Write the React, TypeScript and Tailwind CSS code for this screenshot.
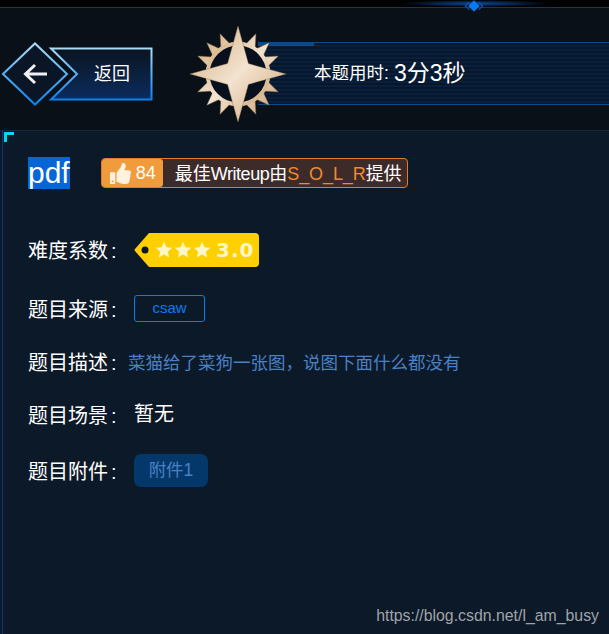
import { FaThumbsUp } from 'react-icons/fa';

const FONT = "font-['Liberation_Sans','Noto_Sans_CJK_SC',sans-serif]";

// alternating radius polygon, angles in degrees from north
function polar(r: number, deg: number): string {
  const a = (deg * Math.PI) / 180;
  return `${(50 + r * Math.sin(a)).toFixed(2)},${(50 - r * Math.cos(a)).toFixed(2)}`;
}

function spikeRing(): string {
  const pts: string[] = [];
  for (let q = 0; q < 4; q++) {
    for (const d of [24, 45, 66]) {
      pts.push(polar(32, q * 90 + d - 9));
      pts.push(polar(45, q * 90 + d));
      pts.push(polar(32, q * 90 + d + 9));
    }
  }
  return pts.join(' ');
}

function bigStar(): string {
  const pts: string[] = [];
  for (let q = 0; q < 4; q++) {
    pts.push(polar(49, q * 90));
    pts.push(polar(15, q * 90 + 45));
  }
  return pts.join(' ');
}

function Medal() {
  return (
    <svg viewBox="0 0 100 100" className="relative z-10 h-[98px] w-[98px] shrink-0">
      <defs>
        <linearGradient id="gold" x1="0" y1="0" x2="1" y2="1">
          <stop offset="0" stopColor="#d2aa78" />
          <stop offset="0.5" stopColor="#f3e3d0" />
          <stop offset="1" stopColor="#cda272" />
        </linearGradient>
      </defs>
      <polygon points={spikeRing()} fill="url(#gold)" stroke="#7c6a4c" strokeWidth="0.5" />
      <circle cx="50" cy="50" r="33" fill="url(#gold)" />
      <circle cx="50" cy="50" r="29" fill="#07101c" />
      <polygon points={bigStar()} fill="url(#gold)" stroke="#8a7450" strokeWidth="0.4" />
    </svg>
  );
}

function BackButton() {
  return (
    <div className="relative h-[64px] w-[152px] shrink-0">
      <svg viewBox="0 0 152 64" className="absolute inset-0 h-full w-full">
        <defs>
          <linearGradient id="edge" x1="0" y1="0" x2="0" y2="1">
            <stop offset="0" stopColor="#a9dcf7" />
            <stop offset="1" stopColor="#0a82ee" />
          </linearGradient>
          <linearGradient id="fill" x1="0" y1="0" x2="0" y2="1">
            <stop offset="0" stopColor="#0a1420" />
            <stop offset="1" stopColor="#0b2c5e" />
          </linearGradient>
        </defs>
        <path d="M50 6.5H150.5V57.5H50L76 32Z" fill="url(#fill)" stroke="url(#edge)" strokeWidth="2" />
        <path d="M2 32L34 1.5L66 32L34 62.5Z" fill="#0a1626" stroke="url(#edge)" strokeWidth="2" />
        <path d="M24 32H46M34 23L24.5 32L34 41" fill="none" stroke="#f0f0f4" strokeWidth="3" />
      </svg>
      <span className="absolute left-[93px] top-[21px] text-[18px] leading-[22px] text-white">返回</span>
    </div>
  );
}

function Row({ label, className, children }: { label: string; className: string; children: React.ReactNode }) {
  return (
    <div className={`flex items-center ${className}`}>
      <span className="w-[106px] shrink-0 pt-[2px] text-[20px] leading-[28px] text-white">
        {label}
        <span className="ml-[3px]">:</span>
      </span>
      {children}
    </div>
  );
}

function Star() {
  return (
    <svg viewBox="0 0 24 24" className="h-[18px] w-[18px]" fill="#fff6c8">
      <path d="M12 1l3.3 7.3 7.7.8-5.8 5.2 1.7 7.7L12 18l-6.9 4 1.7-7.7L1 9.1l7.7-.8z" />
    </svg>
  );
}

function Tag() {
  return (
    <div className="relative h-[34px] w-[125px]">
      <svg viewBox="0 0 125 34" className="absolute inset-0 h-full w-full">
        <path d="M15 0H121Q125 0 125 4V30Q125 34 121 34H15L1 18Q0 17 1 16Z" fill="#ffd000" />
        <circle cx="11" cy="17" r="3.5" fill="#0c1928" />
      </svg>
      <div className="absolute left-[21px] top-0 flex h-full items-center gap-[1px]">
        <Star />
        <Star />
        <Star />
        <span className="ml-[4px] font-['DejaVu_Sans'] text-[20px] font-bold tracking-[1px] text-[#fff6c8]">3.0</span>
      </div>
    </div>
  );
}

export default function App() {
  return (
    <div className={`relative h-[634px] w-[609px] overflow-hidden bg-[#0c1928] ${FONT}`}>
      {/* top bar */}
      <div className="relative z-20 h-[8px] border-b border-[#0d3a66] bg-black">
        <div className="absolute left-[400px] top-0 h-[7px] w-[150px] bg-[radial-gradient(ellipse_at_center,#0a4a9a_0%,#000000_70%)]" />
        <div className="absolute left-[470px] top-[2px] h-[8px] w-[8px] rotate-45 bg-[#0a78f0]" />
        <div className="absolute left-[466px] top-[3px] h-[6px] w-[6px] rotate-45 border-b border-l border-[#0a5cc0]" />
        <div className="absolute left-[476px] top-[3px] h-[6px] w-[6px] rotate-45 border-t border-r border-[#0a5cc0]" />
      </div>

      {/* header */}
      <header className="flex h-[123px] items-center border-b border-[#12283f] bg-[#0a1018] pl-[1px] pt-[9px]">
        <BackButton />
        <div className="ml-[36px]">
          <Medal />
        </div>
        <div className="relative -ml-[29px] flex h-[63px] flex-1 items-center border-y border-[#0b4a8c] bg-[repeating-linear-gradient(180deg,#06162b_0px,#06162b_2px,#091f3c_2px,#091f3c_4px)] pl-[56px] text-white">
          <div className="absolute -top-px left-0 h-[4px] w-[56px] bg-[#0a4a8c]" />
          <span className="text-[17.5px]">本题用时: </span>
          <span className="ml-[5px] text-[23px]">3分3秒</span>
        </div>
      </header>

      {/* panel */}
      <main className="relative ml-[2px] h-full border-l border-[#0a3a70] pl-[25px]">
        <div className="absolute left-[1px] top-[1px] h-[10px] w-[10px] border-l-[3px] border-t-[3px] border-[#00d8f0]" />

        <div className="flex items-center pt-[26px]">
          <span className="inline-block h-[32px] bg-[#0766d6] text-[30px] leading-[32px] text-white">pdf</span>
          <div className="ml-[31px] flex h-[30px] w-[307px] items-center rounded-[4px] border border-[#e07b30] bg-[#3d2b2a]">
            <div className="flex h-[28px] w-[61px] items-center gap-[5px] rounded-[3px] bg-[#f09c3c] pl-[8px] text-[18px] text-white">
              <FaThumbsUp className="h-[21px] w-[21px] text-[#fff3e0]" />
              <span>84</span>
            </div>
            <span className="ml-[12px] pt-[2px] text-[18px] leading-none whitespace-nowrap text-white">
              最佳<span className="tracking-[-0.45px]">Writeup</span>由
              <span className="tracking-[-0.1px] text-[#f08a2c]">S_O_L_R</span>提供
            </span>
          </div>
        </div>

        <Row label="难度系数" className="mt-[44px]">
          <Tag />
        </Row>

        <Row label="题目来源" className="mt-[27px]">
          <div className="-mt-[2px] flex h-[27px] w-[71px] items-center justify-center rounded-[3px] border border-[#0a7cf0] text-[15px] text-[#0a7cf0]">
            csaw
          </div>
        </Row>

        <div className="mt-[25px] flex items-center">
          <span className="w-[100px] shrink-0 text-[20px] leading-[28px] text-white">
            题目描述<span className="ml-[3px]">:</span>
          </span>
          <span className="text-[17.5px] leading-[28px] whitespace-nowrap text-[#4a80c4]">
            菜猫给了菜狗一张图，说图下面什么都没有
          </span>
        </div>

        <Row label="题目场景" className="mt-[23px]">
          <span className="-mt-[2px] text-[20px] leading-[28px] text-white">暂无</span>
        </Row>

        <Row label="题目附件" className="mt-[24px]">
          <div className="flex h-[33px] w-[74px] items-center justify-center rounded-[7px] bg-[#04386a] text-[17.5px] text-[#4a80c4]">
            附件1
          </div>
        </Row>
      </main>

      <span className="absolute right-[10px] top-[606px] text-[15.85px] leading-[20px] text-[#a0a4a8]">
        https://blog.csdn.net/l_am_busy
      </span>
    </div>
  );
}
